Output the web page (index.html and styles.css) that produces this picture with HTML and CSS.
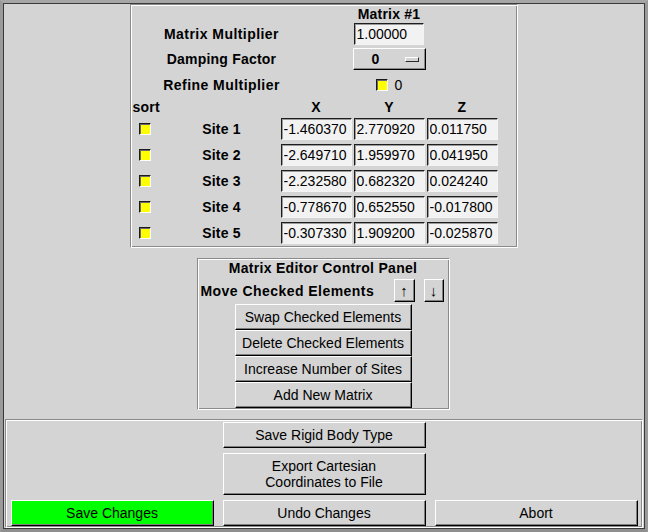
FILE: index.html
```html
<!DOCTYPE html>
<html>
<head>
<meta charset="utf-8">
<link rel="stylesheet" href="styles.css">
</head>
<body>
<div class="window">
  <div class="inner">
    <div class="top">
      <div class="matrix groove">
        <div class="mgrid">
          <div class="c4 lbl">Matrix #1</div>

          <div class="c2 lbl wide">Matrix Multiplier</div>
          <input class="c4 entry entry-mult" type="text" value="1.00000">

          <div class="c2 lbl">Damping Factor</div>
          <div class="c4 optmenu"><span class="optval">0</span><span class="optind"></span></div>

          <div class="c2 lbl wide">Refine Multiplier</div>
          <div class="c4 refine"><span class="chk"></span><span class="chklbl">0</span></div>

          <div class="c1 lbl sort">sort</div>
          <div class="c3 lbl">X</div>
          <div class="c4 lbl">Y</div>
          <div class="c5 lbl">Z</div>

          <span class="c1 chk rowchk"></span>
          <div class="c2 lbl">Site 1</div>
          <input class="c3 entry" type="text" value="-1.460370">
          <input class="c4 entry" type="text" value="2.770920">
          <input class="c5 entry" type="text" value="0.011750">

          <span class="c1 chk rowchk"></span>
          <div class="c2 lbl">Site 2</div>
          <input class="c3 entry" type="text" value="-2.649710">
          <input class="c4 entry" type="text" value="1.959970">
          <input class="c5 entry" type="text" value="0.041950">

          <span class="c1 chk rowchk"></span>
          <div class="c2 lbl">Site 3</div>
          <input class="c3 entry" type="text" value="-2.232580">
          <input class="c4 entry" type="text" value="0.682320">
          <input class="c5 entry" type="text" value="0.024240">

          <span class="c1 chk rowchk"></span>
          <div class="c2 lbl">Site 4</div>
          <input class="c3 entry" type="text" value="-0.778670">
          <input class="c4 entry" type="text" value="0.652550">
          <input class="c5 entry" type="text" value="-0.017800">

          <span class="c1 chk rowchk"></span>
          <div class="c2 lbl">Site 5</div>
          <input class="c3 entry" type="text" value="-0.307330">
          <input class="c4 entry" type="text" value="1.909200">
          <input class="c5 entry" type="text" value="-0.025870">
        </div>
      </div>

      <div class="ctrl groove">
        <div class="ctitle lbl">Matrix Editor Control Panel</div>
        <div class="moverow">
          <span class="lbl wide movelbl">Move Checked Elements</span>
          <button class="btn arrow up">↑</button>
          <button class="btn arrow down">↓</button>
        </div>
        <button class="btn cbtn">Swap Checked Elements</button>
        <button class="btn cbtn">Delete Checked Elements</button>
        <button class="btn cbtn">Increase Number of Sites</button>
        <button class="btn cbtn">Add New Matrix</button>
      </div>
    </div>

    <div class="bottom groove">
      <button class="btn col2 row1">Save Rigid Body Type</button>
      <button class="btn col2 row2">Export Cartesian<br>Coordinates to File</button>
      <button class="btn col1 row3 green">Save Changes</button>
      <button class="btn col2 row3">Undo Changes</button>
      <button class="btn col3 row3">Abort</button>
    </div>
  </div>
</div>
</body>
</html>
```

FILE: styles.css
```css
html, body {
  margin: 0;
  padding: 0;
  background: #d4d4d4;
}

body {
  font-family: "Liberation Sans", Arial, "DejaVu Sans", sans-serif;
  font-size: 14px;
  color: #000;
}

.window {
  width: 648px;
  height: 532px;
  box-sizing: border-box;
  border: 3px solid #9a9a9a;
  border-top-color: #a6a6a6;
  border-bottom-color: #8e8e8e;
}

.inner {
  height: 100%;
  box-sizing: border-box;
  border: 1px solid #3a3a3a;
  background: #d4d4d4;
  display: flex;
  flex-direction: column;
}

.groove {
  box-sizing: border-box;
  border: 1px solid;
  border-color: #8a8a8a #ffffff #ffffff #8a8a8a;
  box-shadow: inset 1px 1px #ffffff, inset -1px -1px #8a8a8a;
}

.top {
  height: 415px;
  display: flex;
  flex-direction: column;
  align-items: center;
}

.matrix {
  width: 388px;
  padding: 1px 17px 1px 1px;
  margin-right: 1px;
}

.mgrid {
  display: grid;
  grid-template-columns: 32px 116px 73px 73px 73px;
  grid-template-rows: 16px 24px 26px 26px 18px repeat(5, 26px);
  align-items: center;
}

.c1 { grid-column: 1; }
.c2 { grid-column: 2; }
.c3 { grid-column: 3; }
.c4 { grid-column: 4; }
.c5 { grid-column: 5; }

.lbl {
  font-weight: bold;
  white-space: nowrap;
  justify-self: center;
  letter-spacing: 0.2px;
}

.lbl.wide {
  letter-spacing: 0.45px;
}

.ctitle.lbl {
  letter-spacing: 0.3px;
}

.sort {
  justify-self: start;
  margin-left: 1px;
}

.entry {
  justify-self: center;
  width: 71px;
  height: 22px;
  box-sizing: border-box;
  margin: 0;
  padding: 0 0 0 2px;
  font-family: "Liberation Sans", Arial, sans-serif;
  font-size: 14px;
  color: #000;
  background: #f2f2f2;
  border: 1px solid;
  border-color: #1e1e1e #f4f4f4 #f4f4f4 #1e1e1e;
  box-shadow: inset 1px 1px #9a9a9a;
  outline: none;
}

.entry-mult {
  width: 70px;
  margin-left: 1px;
  justify-self: start;
}

.optmenu {
  justify-self: center;
  width: 73px;
  height: 22px;
  box-sizing: border-box;
  display: flex;
  align-items: center;
  border: 1px solid;
  border-color: #ffffff #000000 #000000 #ffffff;
  box-shadow: inset -1px -1px #8a8a8a;
  background: #d4d4d4;
}

.optval {
  font-weight: bold;
  width: 44px;
  text-align: center;
}

.optind {
  width: 14px;
  height: 5px;
  box-sizing: border-box;
  margin-left: 7px;
  margin-top: 1px;
  border: 1px solid;
  border-color: #ffffff #2a2a2a #2a2a2a #ffffff;
  background: #d4d4d4;
}

.refine {
  justify-self: center;
  display: flex;
  align-items: center;
  gap: 7px;
}

.chklbl {
  font-size: 14px;
}

.chk {
  display: inline-block;
  width: 12px;
  height: 12px;
  box-sizing: border-box;
  background: #ffff00;
  border: 1px solid;
  border-color: #1a1a1a #ffffff #ffffff #1a1a1a;
  box-shadow: inset 1px 1px #6a6a6a;
}

.rowchk {
  justify-self: start;
  margin-left: 7px;
}

.ctrl {
  width: 253px;
  margin-top: 10px;
  margin-right: 2px;
  padding: 1px;
  display: flex;
  flex-direction: column;
  align-items: center;
}

.ctitle {
  height: 17px;
  line-height: 17px;
}

.moverow {
  align-self: stretch;
  height: 27px;
  display: flex;
  align-items: center;
  padding-left: 2px;
}

.movelbl {
  flex: 1;
}

.btn {
  margin: 0;
  padding: 0;
  box-sizing: border-box;
  font-family: "Liberation Sans", Arial, sans-serif;
  font-size: 14px;
  color: #000;
  background: #d4d4d4;
  border: 1px solid;
  border-color: #ffffff #000000 #000000 #ffffff;
  box-shadow: inset -1px -1px #7e7e7e;
  line-height: 16px;
}

.arrow {
  height: 23px;
  font-family: "Liberation Sans", "DejaVu Sans", sans-serif;
  font-size: 15px;
  font-weight: normal;
}

.up {
  width: 21px;
  margin-right: 9px;
}

.down {
  width: 20px;
  margin-right: 4px;
}

.cbtn {
  width: 177px;
  height: 26px;
}

.bottom {
  flex: 1;
  display: grid;
  grid-template-columns: repeat(3, 203px);
  grid-template-rows: 26px 42px 26px;
  gap: 5px 9px;
  justify-content: center;
  align-content: center;
  margin-left: 1px;
  margin-right: 1px;
}

.bottom .btn {
  width: 203px;
}

.col1 { grid-column: 1; }
.col2 { grid-column: 2; }
.col3 { grid-column: 3; }
.row1 { grid-row: 1; }
.row2 { grid-row: 2; }
.row3 { grid-row: 3; }

.green {
  background: #00ff00;
}
```
